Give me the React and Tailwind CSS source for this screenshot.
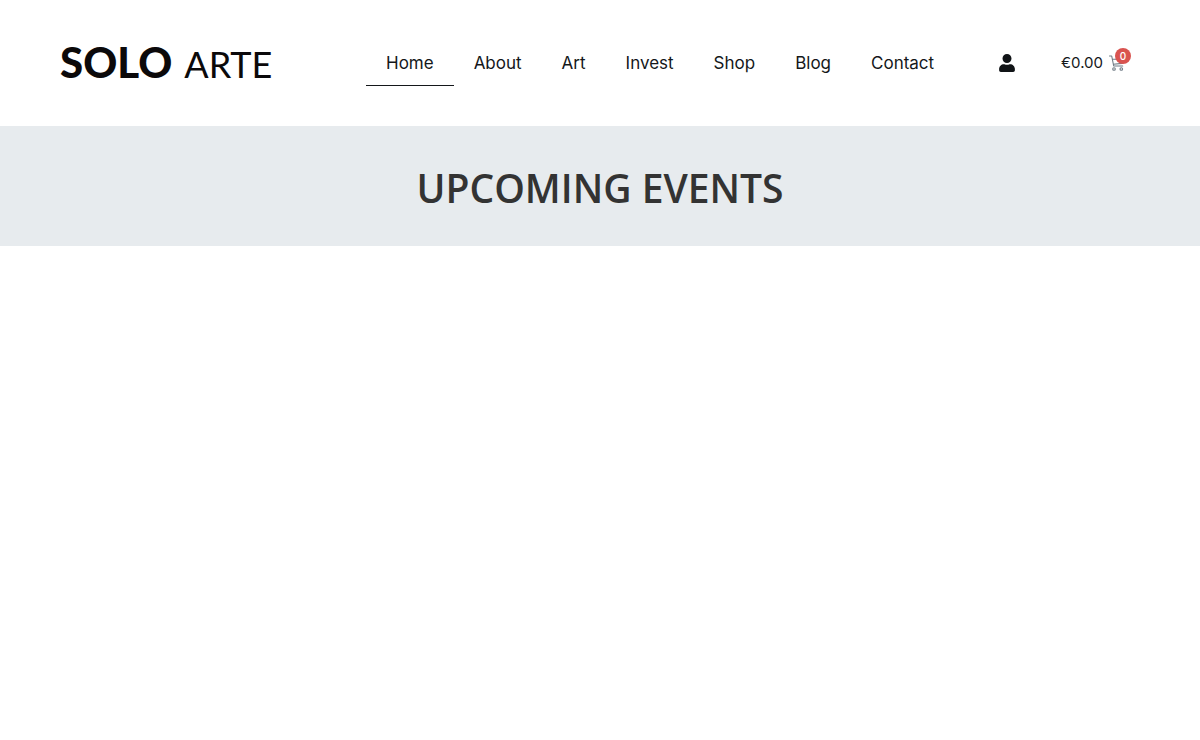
import { FaUser } from 'react-icons/fa';

const links = ['Home', 'About', 'Art', 'Invest', 'Shop', 'Blog', 'Contact'];

function Logo() {
  return (
    <a
      href="#home"
      aria-label="Solo Arte"
      className="flex w-[306px] items-baseline gap-3 pb-0.5 pl-[60px] font-['Lato',sans-serif] text-[42px] leading-none text-[#0b090a]"
    >
      <span className="font-black">SOLO</span>
      <span className="text-[36px]">ARTE</span>
    </a>
  );
}

function CartIcon() {
  return (
    <svg
      viewBox="0 0 16 16"
      className="h-4 w-4"
      fill="none"
      stroke="currentColor"
      strokeWidth="1.1"
      strokeLinecap="round"
      strokeLinejoin="round"
      aria-hidden="true"
    >
      <path d="M.5 1h2.2l2 10h9M3.3 4.2h11.2l-1.2 4.2-9 .8" />
      <circle cx="5" cy="14" r="1.3" />
      <circle cx="12.3" cy="14" r="1.3" />
    </svg>
  );
}

export default function App() {
  return (
    <div className="min-h-screen bg-white">
      <header className="flex h-[126px] items-center">
        <Logo />
        <nav className="ml-[60px] flex font-['Inter',sans-serif] text-[17px] leading-5 text-[#14171a]">
          {links.map((name) => (
            <a
              key={name}
              href={`#${name.toLowerCase()}`}
              className={
                name === 'Home'
                  ? 'border-b border-[#14171a] px-5 py-3'
                  : 'border-b border-transparent px-5 py-3'
              }
            >
              {name}
            </a>
          ))}
        </nav>
        <div className="ml-auto flex items-center pr-[75px]">
          <a href="#account" aria-label="Account" className="text-[#111417]">
            <FaUser size={18} />
          </a>
          <a
            href="#cart"
            className="ml-[45px] flex items-center gap-1.5 font-['Inter',sans-serif] text-[15px] text-[#14171a]"
          >
            <span>€0.00</span>
            <span className="relative text-[#6f7b85]">
              <CartIcon />
              <span className="absolute -top-[7px] left-1.5 h-4 w-4 rounded-full bg-[#d9534f] text-center text-[10px] leading-4 font-medium text-white">
                0
              </span>
            </span>
          </a>
        </div>
      </header>
      <section className="bg-[#e7ebee] pt-10 pb-9">
        <h1 className="text-center font-['Open_Sans',sans-serif] text-[39px] leading-11 font-semibold text-[#333333]">
          UPCOMING EVENTS
        </h1>
      </section>
    </div>
  );
}
